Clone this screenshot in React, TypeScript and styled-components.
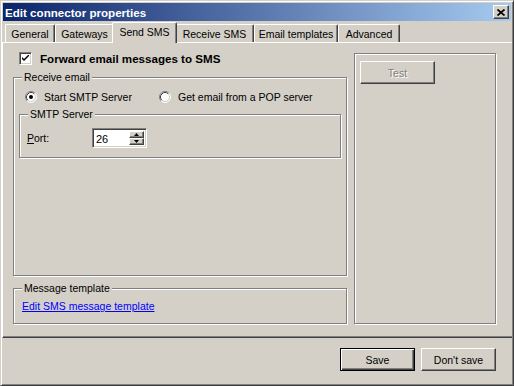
import React from "react";
import styled, { createGlobalStyle, css } from "styled-components";

const GlobalStyle = createGlobalStyle`
  html, body { margin: 0; padding: 0; background: #d4d0c8; }
  body {
    font-family: "Liberation Sans", Arial, sans-serif;
    font-size: 10.5px;
    color: #000;
  }
  #root { width: 514px; height: 386px; overflow: hidden; }
`;

const raised = css`
  border: 1px solid;
  border-color: #fff #404040 #404040 #fff;
  box-shadow: inset -1px -1px #808080, inset 1px 1px #d4d0c8;
`;

const Window = styled.div`
  box-sizing: border-box;
  width: 514px;
  height: 386px;
  display: flex;
  flex-direction: column;
  background: #d4d0c8;
  border: 1px solid;
  border-color: #d4d0c8 #404040 #404040 #d4d0c8;
  box-shadow: inset 1px 1px #fff, inset -1px -1px #808080;
  padding: 1px;
`;

const TitleBar = styled.div`
  height: 18px;
  margin: 1px 1px 1px 1px;
  display: flex;
  align-items: center;
  justify-content: space-between;
  padding-left: 2px;
  background: linear-gradient(to right, #0a246a, #a6caf0);
`;

const TitleText = styled.span`
  color: #fff;
  font-weight: bold;
  font-size: 11.6px;
  letter-spacing: 0;
`;

const CloseButton = styled.div`
  ${raised};
  box-sizing: border-box;
  width: 16px;
  height: 14px;
  margin-right: 2px;
  background: #d4d0c8;
  display: flex;
  align-items: center;
  justify-content: center;
`;

const TabStrip = styled.div`
  position: relative;
  z-index: 1;
  height: 20px;
  display: flex;
  align-items: flex-end;
  padding-left: 3px;
`;

const Tab = styled.div<{ $w: number; $active?: boolean }>`
  box-sizing: border-box;
  width: ${(p) => p.$w}px;
  height: 18px;
  flex: none;
  display: flex;
  align-items: center;
  justify-content: center;
  background: #d4d0c8;
  border-top: 1px solid #fff;
  border-left: 1px solid #fff;
  border-right: 1px solid #404040;
  border-radius: 2px 2px 0 0;
  box-shadow: inset -1px 0 #808080;
  white-space: nowrap;
  ${(p) =>
    p.$active &&
    css`
      position: relative;
      z-index: 2;
      height: 21px;
      margin: 0 -2px -1px -2px;
      padding-bottom: 3px;
    `}
`;

const Panel = styled.div`
  box-sizing: border-box;
  height: 296px;
  flex: none;
  border-top: 1px solid #fff;
  border-left: 1px solid #fff;
  border-bottom: 1px solid #404040;
  box-shadow: inset 0 -1px #808080;
  padding: 9px 0 0 10px;
  display: flex;
  gap: 7px;
`;

const LeftColumn = styled.div`
  width: 334px;
  display: flex;
  flex-direction: column;
`;

const CheckRow = styled.label`
  height: 13px;
  display: flex;
  align-items: center;
  gap: 8px;
  padding-left: 6px;
`;

const CheckBox = styled.span`
  box-sizing: border-box;
  width: 13px;
  height: 13px;
  flex: none;
  background: #fff;
  border: 1px solid;
  border-color: #808080 #fff #fff #808080;
  box-shadow: inset 1px 1px #404040, inset -1px -1px #d4d0c8;
  display: flex;
  align-items: center;
  justify-content: center;
`;

const BoldLabel = styled.span`
  font-weight: bold;
  font-size: 11.6px;
  white-space: nowrap;
`;

const Group = styled.div<{
  $w?: number;
  $h: number;
  $mt: number;
  $ml?: number;
  $pad: string;
}>`
  position: relative;
  box-sizing: border-box;
  width: ${(p) => (p.$w ? `${p.$w}px` : "auto")};
  height: ${(p) => p.$h}px;
  margin-top: ${(p) => p.$mt}px;
  margin-left: ${(p) => p.$ml ?? 0}px;
  padding: ${(p) => p.$pad};
  border: 1px solid #808080;
  box-shadow: inset 1px 1px #fff, 1px 1px #fff;
  display: flex;
  flex-direction: column;
  align-items: flex-start;
`;

const Legend = styled.span`
  position: absolute;
  top: -7px;
  left: 8px;
  padding: 0 2px;
  line-height: 13px;
  background: #d4d0c8;
  white-space: nowrap;
`;

const RadioRow = styled.div`
  display: flex;
  align-items: center;
  height: 12px;
  margin-left: 6px;
`;

const RadioItem = styled.label<{ $w?: number }>`
  display: flex;
  align-items: center;
  gap: 7px;
  width: ${(p) => (p.$w ? `${p.$w}px` : "auto")};
  white-space: nowrap;
`;

const PortRow = styled.div`
  display: flex;
  align-items: center;
`;

const PortLabel = styled.span`
  width: 65px;
`;

const SpinBox = styled.div`
  box-sizing: border-box;
  width: 55px;
  height: 20px;
  display: flex;
  padding: 2px;
  background: #fff;
  border: 1px solid;
  border-color: #808080 #fff #fff #808080;
  box-shadow: inset 1px 1px #404040, inset -1px -1px #d4d0c8;
`;

const SpinValue = styled.span`
  flex: 1;
  padding-left: 1px;
  line-height: 16px;
  font-size: 11px;
`;

const SpinButtons = styled.div`
  width: 15px;
  display: flex;
  flex-direction: column;
`;

const SpinButton = styled.div`
  ${raised};
  box-sizing: border-box;
  height: 8px;
  background: #d4d0c8;
  display: flex;
  align-items: center;
  justify-content: center;
`;

const LinkText = styled.a`
  color: #0000ff;
  text-decoration: underline;
  line-height: 13px;
  cursor: pointer;
  white-space: nowrap;
`;

const RightFrame = styled.div`
  box-sizing: border-box;
  width: 142px;
  height: 271px;
  margin-top: 1px;
  padding: 7px 0 0 5px;
  border: 1px solid #808080;
  box-shadow: inset 1px 1px #fff, 1px 1px #fff;
`;

const Button = styled.button<{ $default?: boolean; $disabled?: boolean }>`
  box-sizing: border-box;
  width: 75px;
  height: 23px;
  padding: 0;
  font-family: inherit;
  font-size: 10.5px;
  background: #d4d0c8;
  color: #000;
  ${(p) =>
    p.$default
      ? css`
          border: 1px solid #000;
          box-shadow: inset 1px 1px #fff, inset -1px -1px #404040,
            inset -2px -2px #808080;
        `
      : raised}
  ${(p) =>
    p.$disabled &&
    css`
      color: #808080;
      text-shadow: 1px 1px #fff;
    `}
`;

const ButtonRow = styled.div`
  display: flex;
  justify-content: flex-end;
  gap: 6px;
  padding: 10px 16px 0 0;
`;

const CloseGlyph = () => (
  <svg width="8" height="7" viewBox="0 0 8 7">
    <path d="M0.5 0.5 L7.5 6.5 M7.5 0.5 L0.5 6.5" stroke="#000" strokeWidth="1.7" />
  </svg>
);

const CheckGlyph = () => (
  <svg width="7" height="7" viewBox="0 0 7 7">
    <path d="M0 2 L0 4 L2 6 L7 1 L7 -1 L2 4 Z" fill="#000" />
  </svg>
);

const RadioGlyph = ({ checked }: { checked?: boolean }) => (
  <svg width="12" height="12" viewBox="0 0 12 12" style={{ flex: "none" }}>
    <circle cx="6" cy="6" r="5" fill="#fff" />
    <path d="M2.11 9.89 A5.5 5.5 0 0 1 9.89 2.11" stroke="#808080" fill="none" />
    <path d="M9.89 2.11 A5.5 5.5 0 0 1 2.11 9.89" stroke="#fff" fill="none" />
    <path d="M2.82 9.18 A4.5 4.5 0 0 1 9.18 2.82" stroke="#404040" fill="none" />
    <path d="M9.18 2.82 A4.5 4.5 0 0 1 2.82 9.18" stroke="#d4d0c8" fill="none" />
    {checked && <circle cx="6" cy="6" r="2" fill="#000" />}
  </svg>
);

const Arrow = ({ up }: { up?: boolean }) => (
  <svg width="5" height="3" viewBox="0 0 5 3">
    <polygon points={up ? "2.5,0 5,3 0,3" : "0,0 5,0 2.5,3"} fill="#000" />
  </svg>
);

const tabs = [
  { label: "General", w: 50 },
  { label: "Gateways", w: 59 },
  { label: "Send SMS", w: 65, active: true },
  { label: "Receive SMS", w: 79 },
  { label: "Email templates", w: 84 },
  { label: "Advanced", w: 62 },
];

export default function App() {
  return (
    <>
      <GlobalStyle />
      <Window>
        <TitleBar>
          <TitleText>Edit connector properties</TitleText>
          <CloseButton>
            <CloseGlyph />
          </CloseButton>
        </TitleBar>
        <TabStrip>
          {tabs.map((t) => (
            <Tab key={t.label} $w={t.w} $active={t.active}>
              {t.label}
            </Tab>
          ))}
        </TabStrip>
        <Panel>
          <LeftColumn>
            <CheckRow>
              <CheckBox>
                <CheckGlyph />
              </CheckBox>
              <BoldLabel>Forward email messages to SMS</BoldLabel>
            </CheckRow>
            <Group $h={199} $mt={12} $pad="13px 0 0 5px">
              <Legend>Receive email</Legend>
              <RadioRow>
                <RadioItem $w={134}>
                  <RadioGlyph checked />
                  Start SMTP Server
                </RadioItem>
                <RadioItem>
                  <RadioGlyph />
                  Get email from a POP server
                </RadioItem>
              </RadioRow>
              <Group $w={322} $h={44} $mt={11} $pad="13px 0 0 7px">
                <Legend>SMTP Server</Legend>
                <PortRow>
                  <PortLabel>
                    <u>P</u>ort:
                  </PortLabel>
                  <SpinBox>
                    <SpinValue>26</SpinValue>
                    <SpinButtons>
                      <SpinButton>
                        <Arrow up />
                      </SpinButton>
                      <SpinButton>
                        <Arrow />
                      </SpinButton>
                    </SpinButtons>
                  </SpinBox>
                </PortRow>
              </Group>
            </Group>
            <Group $h={36} $mt={12} $pad="11px 0 0 8px">
              <Legend>Message template</Legend>
              <LinkText>Edit SMS message template</LinkText>
            </Group>
          </LeftColumn>
          <RightFrame>
            <Button $disabled>Test</Button>
          </RightFrame>
        </Panel>
        <ButtonRow>
          <Button $default>Save</Button>
          <Button>Don't save</Button>
        </ButtonRow>
      </Window>
    </>
  );
}
